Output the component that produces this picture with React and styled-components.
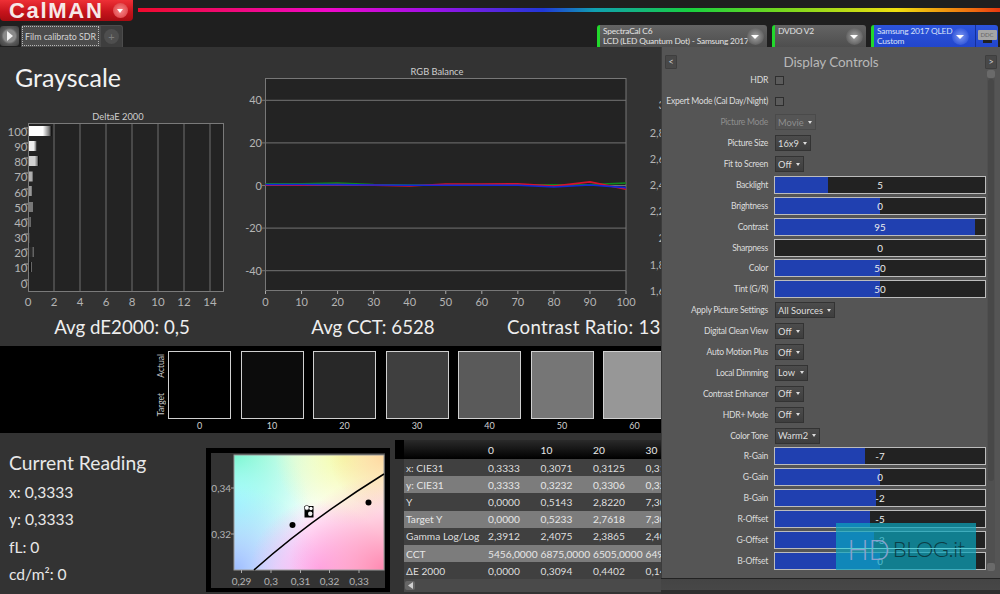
import styled, { createGlobalStyle } from 'styled-components';

const DISPLAY_FONT = '"Lato", "Open Sans", sans-serif';

const GlobalStyle = createGlobalStyle`
  html, body {
    margin: 0;
    padding: 0;
    background: #1f1f1f;
  }
  * {
    box-sizing: border-box;
  }
`;

const devices = [
  { lines: ['SpectraCal C6', 'LCD (LED Quantum Dot) - Samsung 2017'], width: 170 },
  { lines: ['DVDO V2'], width: 94 },
  { lines: ['Samsung 2017 QLED', 'Custom'], width: 127, active: true },
];

const controls = [
  { label: 'HDR', type: 'check' },
  { label: 'Expert Mode (Cal Day/Night)', type: 'check' },
  { label: 'Picture Mode', type: 'select', value: 'Movie', width: 41, disabled: true },
  { label: 'Picture Size', type: 'select', value: '16x9', width: 36 },
  { label: 'Fit to Screen', type: 'select', value: 'Off', width: 29 },
  { label: 'Backlight', type: 'slider', value: '5', fill: 25 },
  { label: 'Brightness', type: 'slider', value: '0', fill: 50 },
  { label: 'Contrast', type: 'slider', value: '95', fill: 95 },
  { label: 'Sharpness', type: 'slider', value: '0', fill: 0 },
  { label: 'Color', type: 'slider', value: '50', fill: 50 },
  { label: 'Tint (G/R)', type: 'slider', value: '50', fill: 50 },
  { label: 'Apply Picture Settings', type: 'select', value: 'All Sources', width: 60 },
  { label: 'Digital Clean View', type: 'select', value: 'Off', width: 29 },
  { label: 'Auto Motion Plus', type: 'select', value: 'Off', width: 29 },
  { label: 'Local Dimming', type: 'select', value: 'Low', width: 33 },
  { label: 'Contrast Enhancer', type: 'select', value: 'Off', width: 29 },
  { label: 'HDR+ Mode', type: 'select', value: 'Off', width: 29 },
  { label: 'Color Tone', type: 'select', value: 'Warm2', width: 45 },
  { label: 'R-Gain', type: 'slider', value: '-7', fill: 43 },
  { label: 'G-Gain', type: 'slider', value: '0', fill: 50 },
  { label: 'B-Gain', type: 'slider', value: '-2', fill: 48 },
  { label: 'R-Offset', type: 'slider', value: '-5', fill: 45 },
  { label: 'G-Offset', type: 'slider', value: '-3', fill: 47 },
  { label: 'B-Offset', type: 'slider', value: '0', fill: 50 },
];

const swatches = [
  { level: 0, color: '#000000' },
  { level: 10, color: '#0c0c0c' },
  { level: 20, color: '#282828' },
  { level: 30, color: '#3f3f3f' },
  { level: 40, color: '#5a5a5a' },
  { level: 50, color: '#767676' },
  { level: 60, color: '#979797' },
];

const tableRows = [
  ['x: CIE31', '0,3333', '0,3071', '0,3125', '0,3130'],
  ['y: CIE31', '0,3333', '0,3232', '0,3306', '0,3290'],
  ['Y', '0,0000', '0,5143', '2,8220', '7,3000'],
  ['Target Y', '0,0000', '0,5233', '2,7618', '7,3050'],
  ['Gamma Log/Log', '2,3912', '2,4075', '2,3865', '2,4050'],
  ['CCT', '5456,0000', '6875,0000', '6505,0000', '6495,0000'],
  ['ΔE 2000', '0,0000', '0,3094', '0,4402', '0,1450'],
];

const deltaBars = [
  { y: 126, end: 52, color: '#ffffff' },
  { y: 141, end: 37, color: '#eeeeee' },
  { y: 156, end: 38.5, color: '#d0d0d0' },
  { y: 171.5, end: 33, color: '#b0b0b0' },
  { y: 186, end: 32, color: '#989898' },
  { y: 202, end: 33, color: '#787878' },
  { y: 217, end: 31, color: '#585858' },
  { y: 233, end: 30, color: '#3a3a3a' },
  { y: 247, end: 34, color: '#2a2a2a' },
  { y: 262, end: 32, color: '#141414' },
];

const deltaYLabels = [
  [100, 132], [90, 147], [80, 162], [70, 177], [60, 193], [50, 208],
  [40, 223], [30, 238], [20, 253], [10, 268], [0, 284],
];

const deltaXLabels = [
  [0, 28], [2, 54], [4, 80], [6, 106], [8, 132], [10, 158], [12, 184], [14, 210],
];

const rgbSeries = [
  { color: '#0f8a1c', points: [0.8, 0.8, 1.2, 0.4, 0.2, 0.2, 0.3, 0.3, 0.3, 0.4, 1.2] },
  { color: '#d8102c', points: [0.3, 0.1, 0.4, 0.1, -0.2, 0.7, 0.7, 0.8, -0.3, 1.7, -1.8] },
  { color: '#1226d8', points: [0.5, 0.5, 0.4, 0.2, 0.1, 0.1, 0.1, 0.1, -0.7, 0.2, -1] },
];

const rgbX = (i) => 265.5 + i * 36.05;
const rgbY = (v) => 185.5 - v * 2.13;

function DeltaChart() {
  return (
    <svg width="244" height="188" viewBox="0 122 244 188">
      <defs>
        {deltaBars.map((bar, i) => (
          <linearGradient key={i} id={`bar${i}`}>
            <stop offset="0" stopColor={bar.color} />
            <stop offset="0.6" stopColor={bar.color} />
            <stop offset="0.88" stopColor="#777" />
            <stop offset="1" stopColor="#000" />
          </linearGradient>
        ))}
      </defs>
      <rect x="28.5" y="123.5" width="195" height="168" fill="#232323" stroke="#7a7a7a" />
      {deltaXLabels.slice(1).map(([label, x]) => (
        <line key={label} x1={x} x2={x} y1="124" y2="291" stroke="#707070" />
      ))}
      {deltaBars.map((bar, i) => (
        <rect key={i} x="29" y={bar.y} width={bar.end - 29} height="10" fill={`url(#bar${i})`} />
      ))}
      {deltaYLabels.map(([label, y]) => (
        <g key={label}>
          <line x1="24" x2="28" y1={y - 4} y2={y - 4} stroke="#aaa" />
          <ChartText x="27.5" y={y + 4} textAnchor="end" $size={11.5}>{label}</ChartText>
        </g>
      ))}
      {deltaXLabels.map(([label, x]) => (
        <ChartText key={label} x={x} y="306" textAnchor="middle" $size={11.5}>{label}</ChartText>
      ))}
    </svg>
  );
}

function RgbChart() {
  const yLabels = [40, 20, 0, -20, -40];
  const xLabels = [0, 10, 20, 30, 40, 50, 60, 70, 80, 90, 100];
  return (
    <svg width="396" height="232" viewBox="244 78 396 232">
      <rect x="265.5" y="78.5" width="360.5" height="212" fill="#232323" stroke="#777" />
      {yLabels.map((label) => (
        <g key={label}>
          <line x1="262" x2="626" y1={rgbY(label)} y2={rgbY(label)} stroke="#737373" />
          <ChartText x="262" y={rgbY(label) + 4} textAnchor="end" $size={11}>{label}</ChartText>
        </g>
      ))}
      {xLabels.map((label, i) => (
        <g key={label}>
          <line x1={rgbX(i)} x2={rgbX(i)} y1="291" y2="294" stroke="#aaa" />
          <ChartText x={rgbX(i)} y="306" textAnchor="middle" $size={11}>{label}</ChartText>
        </g>
      ))}
      {rgbSeries.map((series) => (
        <polyline
          key={series.color}
          points={series.points.map((v, i) => `${rgbX(i)},${rgbY(v)}`).join(' ')}
          fill="none"
          stroke={series.color}
          strokeWidth="1.6"
          strokeLinejoin="round"
        />
      ))}
    </svg>
  );
}

function GammaAxis() {
  const labels = [
    ['3', 109], ['2,8', 137], ['2,6', 163], ['2,4', 189],
    ['2,2', 215], ['2', 242], ['1,8', 269], ['1,6', 295],
  ];
  return (
    <svg width="21" height="232" viewBox="640 78 21 232">
      {labels.map(([label, y]) => (
        <ChartText key={label} x="665" y={y} textAnchor="end" $size={11}>{label}</ChartText>
      ))}
    </svg>
  );
}

function CiePlot() {
  return (
    <svg width="175" height="135" viewBox="211 453 175 135">
      <defs>
        <radialGradient id="cieTL" gradientUnits="userSpaceOnUse" cx="234" cy="455" r="105">
          <stop offset="0" stopColor="#68f4b8" />
          <stop offset="1" stopColor="#c8ffe0" stopOpacity="0" />
        </radialGradient>
        <radialGradient id="cieL" gradientUnits="userSpaceOnUse" cx="234" cy="505" r="75">
          <stop offset="0" stopColor="#a0fbff" />
          <stop offset="1" stopColor="#a0fbff" stopOpacity="0" />
        </radialGradient>
        <radialGradient id="cieBL" gradientUnits="userSpaceOnUse" cx="234" cy="570" r="85">
          <stop offset="0" stopColor="#9dbcff" />
          <stop offset="1" stopColor="#b8d8ff" stopOpacity="0" />
        </radialGradient>
        <radialGradient id="cieT" gradientUnits="userSpaceOnUse" cx="345" cy="455" r="70">
          <stop offset="0" stopColor="#f4fca8" />
          <stop offset="1" stopColor="#f4fca8" stopOpacity="0" />
        </radialGradient>
        <radialGradient id="cieTR" gradientUnits="userSpaceOnUse" cx="384" cy="455" r="55">
          <stop offset="0" stopColor="#ffd8a0" />
          <stop offset="1" stopColor="#ffd8a0" stopOpacity="0" />
        </radialGradient>
        <radialGradient id="cieB" gradientUnits="userSpaceOnUse" cx="320" cy="570" r="70">
          <stop offset="0" stopColor="#ffaaf2" />
          <stop offset="1" stopColor="#ffaaf2" stopOpacity="0" />
        </radialGradient>
        <radialGradient id="cieBR" gradientUnits="userSpaceOnUse" cx="384" cy="570" r="95">
          <stop offset="0" stopColor="#ff88b0" />
          <stop offset="1" stopColor="#ff9cc0" stopOpacity="0" />
        </radialGradient>
      </defs>
      <rect x="234" y="455" width="150" height="115" fill="#ffffff" />
      {['cieTL', 'cieL', 'cieBL', 'cieT', 'cieTR', 'cieB', 'cieBR'].map((id) => (
        <rect key={id} x="234" y="455" width="150" height="115" fill={`url(#${id})`} />
      ))}
      <rect x="234" y="455" width="150" height="115" fill="none" stroke="#999" />
      <path d="M254 570 Q 310 520 384 474" fill="none" stroke="#000" strokeWidth="1.5" />
      <circle cx="292.5" cy="525" r="3" fill="#000" />
      <circle cx="368.5" cy="502.5" r="3" fill="#000" />
      <rect x="304.5" y="506" width="9" height="11.5" fill="#000" />
      <circle cx="306.8" cy="507.8" r="2.4" fill="#fff" stroke="#000" strokeWidth="0.6" />
      <circle cx="311" cy="508.5" r="1.7" fill="#fff" />
      <circle cx="310.2" cy="513.8" r="2.2" fill="#eee" />
      {[[241.5, '0,29'], [271, '0,3'], [300.5, '0,31'], [329.5, '0,32'], [359, '0,33']].map(([x, label]) => (
        <g key={label}>
          <line x1={x} x2={x} y1="570" y2="573" stroke="#aaa" />
          <ChartText x={x} y="585" textAnchor="middle" $size={10}>{label}</ChartText>
        </g>
      ))}
      {[[488, '0,34'], [534, '0,32']].map(([y, label]) => (
        <g key={label}>
          <line x1="231" x2="234" y1={y} y2={y} stroke="#aaa" />
          <ChartText x="231" y={y + 3.5} textAnchor="end" $size={10}>{label}</ChartText>
        </g>
      ))}
    </svg>
  );
}

function Control({ item }) {
  if (item.type === 'check') return <Check />;
  if (item.type === 'select') {
    return (
      <Select $width={item.width} $disabled={item.disabled}>
        {item.value}
        <Caret />
      </Select>
    );
  }
  return (
    <Slider>
      <SliderFill style={{ width: `${item.fill}%` }} />
      <SliderValue>{item.value}</SliderValue>
    </Slider>
  );
}

export default function App() {
  return (
    <Page>
      <GlobalStyle />
      <TopBar>
        <Logo>
          <LogoText>CalMAN</LogoText>
          <LogoMenu />
        </Logo>
        <Rainbow />
      </TopBar>

      <TabBar>
        <Tabs>
          <PlayButton>
            <svg width="8" height="10" viewBox="0 0 8 10">
              <path d="M1 0 L7 5 L1 10 Z" fill="#f2f2f2" />
            </svg>
          </PlayButton>
          <Tab>
            <TabLabel>Film calibrato SDR</TabLabel>
          </Tab>
          <AddTab>
            <AddCircle>+</AddCircle>
          </AddTab>
        </Tabs>
        <Devices>
          {devices.map((device) => (
            <Device key={device.lines[0]} $width={device.width} $active={device.active}>
              <DeviceText>
                {device.lines.map((line) => (
                  <div key={line}>{line}</div>
                ))}
              </DeviceText>
              <DeviceArrow $active={device.active} />
              {device.active && (
                <DdcButton>
                  <DdcScreen>DDC</DdcScreen>
                  <DdcStand />
                </DdcButton>
              )}
            </Device>
          ))}
        </Devices>
      </TabBar>

      <Main>
        <Workspace>
          <Summary>
            <ChartRow>
              <DeltaColumn>
                <PageTitle>Grayscale</PageTitle>
                <DeltaTitle>DeltaE 2000</DeltaTitle>
                <DeltaChart />
              </DeltaColumn>
              <RgbColumn>
                <RgbTitle>RGB Balance</RgbTitle>
                <RgbChart />
              </RgbColumn>
              <GammaColumn>
                <GammaAxis />
              </GammaColumn>
            </ChartRow>
            <StatRow>
              <Stat>Avg dE2000: 0,5</Stat>
              <Stat>Avg CCT: 6528</Stat>
              <Stat $left>Contrast Ratio: 13</Stat>
            </StatRow>
          </Summary>

          <Strip>
            <StripSide>
              <SideLabel>Actual</SideLabel>
              <SideLabel>Target</SideLabel>
            </StripSide>
            {swatches.map((swatch) => (
              <SwatchColumn key={swatch.level}>
                <Swatch $color={swatch.color} />
                <SwatchLabel>{swatch.level}</SwatchLabel>
              </SwatchColumn>
            ))}
          </Strip>

          <Bottom>
            <Reading>
              <ReadingTitle>Current Reading</ReadingTitle>
              <ReadingLine>x: 0,3333</ReadingLine>
              <ReadingLine>y: 0,3333</ReadingLine>
              <ReadingLine>fL: 0</ReadingLine>
              <ReadingLine>cd/m²: 0</ReadingLine>
            </Reading>
            <CieFrame>
              <CiePlot />
            </CieFrame>
            <TableWrap>
              <DataTable>
                <thead>
                  <tr>
                    <CornerCell />
                    <HeadCell />
                    {[0, 10, 20, 30].map((level) => (
                      <HeadCell key={level}>{level}</HeadCell>
                    ))}
                  </tr>
                </thead>
                <tbody>
                  {tableRows.map((row, i) => (
                    <tr key={row[0]}>
                      <SelectCell />
                      {row.map((cell, j) => (
                        <BodyCell key={j} $even={i % 2 === 1}>{cell}</BodyCell>
                      ))}
                    </tr>
                  ))}
                </tbody>
              </DataTable>
              <TableScroll>
                <TableScrollButton>
                  <svg width="5" height="7" viewBox="0 0 5 7">
                    <path d="M5 0 L0 3.5 L5 7 Z" fill="#cfcfcf" />
                  </svg>
                </TableScrollButton>
              </TableScroll>
            </TableWrap>
          </Bottom>
        </Workspace>

        <PanelColumn>
          <Panel>
            <PanelHeader>
              <PanelButton>&lt;</PanelButton>
              <PanelTitle>Display Controls</PanelTitle>
              <PanelButton>&gt;</PanelButton>
            </PanelHeader>
            <PanelBody>
              <ControlList>
                {controls.map((item) => (
                  <ControlRow key={item.label}>
                    <ControlLabel $disabled={item.disabled}>{item.label}</ControlLabel>
                    <Control item={item} />
                  </ControlRow>
                ))}
              </ControlList>
              <ScrollBar>
                <ScrollEnd />
                <ScrollThumb />
                <ScrollEnd />
              </ScrollBar>
            </PanelBody>
            <Watermark>
              <WatermarkHd>HD</WatermarkHd>
              <WatermarkBlog>BLOG.it</WatermarkBlog>
              <WatermarkLine />
            </Watermark>
          </Panel>
          <PanelFoot />
        </PanelColumn>
      </Main>
    </Page>
  );
}

const Page = styled.div`
  width: 1000px;
  height: 594px;
  overflow: hidden;
  background: #1f1f1f;
  font-family: ${DISPLAY_FONT};
  display: flex;
  flex-direction: column;
`;

const TopBar = styled.div`
  height: 25px;
  display: flex;
  align-items: flex-start;
  gap: 5px;
`;

const Logo = styled.div`
  width: 133px;
  height: 21px;
  background: linear-gradient(#ee3036, #c8141c 55%, #a80c12);
  border-radius: 0 0 4px 4px;
  display: flex;
  align-items: center;
  justify-content: space-between;
  padding: 0 5px 0 9px;
`;

const LogoText = styled.span`
  font-family: "Liberation Sans", sans-serif;
  font-weight: 700;
  font-size: 22px;
  line-height: 21px;
  letter-spacing: 1.7px;
  color: #f6e8e8;
`;

const LogoMenu = styled.span`
  width: 15px;
  height: 15px;
  border-radius: 50%;
  background: radial-gradient(#f8888a, #d83438);
  position: relative;
  &::after {
    content: '';
    position: absolute;
    left: 4px;
    top: 6px;
    border-left: 3.5px solid transparent;
    border-right: 3.5px solid transparent;
    border-top: 4px solid #fff;
  }
`;

const Rainbow = styled.div`
  flex: 1;
  height: 4px;
  margin-top: 8px;
  background: linear-gradient(
    90deg,
    #f00a2c 0%,
    #f008c8 22%,
    #a010e8 34%,
    #2038d8 47%,
    #10a0b0 53%,
    #18d040 64%,
    #70d820 74%,
    #f0e010 88%,
    #f06a10 97%,
    #e83810 100%
  );
`;

const TabBar = styled.div`
  height: 22px;
  display: flex;
  justify-content: space-between;
  align-items: stretch;
  padding-right: 2px;
`;

const Tabs = styled.div`
  display: flex;
  gap: 2px;
`;

const PlayButton = styled.div`
  width: 19px;
  height: 20px;
  margin-top: 1px;
  border-radius: 3px;
  background: radial-gradient(circle at 50% 50%, #8a8a8a 0 6px, #5a5a5a 8px, #3c3c3c);
  display: flex;
  align-items: center;
  justify-content: center;
`;

const Tab = styled.div`
  width: 79px;
  flex-shrink: 0;
  padding: 1px;
  background: #4c4c4c;
  border-radius: 3px 0 0 0;
`;

const TabLabel = styled.div`
  height: 100%;
  border: 1px dotted #b8b8b8;
  color: #d4d4d4;
  font-size: 8.9px;
  letter-spacing: -0.05px;
  display: flex;
  align-items: center;
  justify-content: center;
  white-space: nowrap;
`;

const AddTab = styled.div`
  width: 23px;
  flex-shrink: 0;
  margin-left: -2px;
  background: #3e3e3e;
  border: 1px solid #4c4c4c;
  border-bottom: 0;
  border-radius: 0 3px 0 0;
  display: flex;
  align-items: center;
  justify-content: center;
`;

const AddCircle = styled.div`
  width: 15px;
  height: 15px;
  border-radius: 50%;
  background: #4e4e4e;
  color: #7c7c7c;
  font-size: 11px;
  line-height: 15px;
  text-align: center;
`;

const Devices = styled.div`
  display: flex;
  gap: 5px;
`;

const Device = styled.div`
  width: ${(p) => p.$width}px;
  background: ${(p) => (p.$active ? 'linear-gradient(#2c54dc, #2246cc)' : 'linear-gradient(#646464, #4e4e4e)')};
  border-left: 3px solid #22d82c;
  border-radius: 3px 3px 0 0;
  display: flex;
  align-items: stretch;
  color: ${(p) => (p.$active ? '#d8e0f8' : '#e2e2e2')};
`;

const DeviceText = styled.div`
  flex: 1;
  min-width: 0;
  padding: 1px 0 0 3px;
  font-size: 8.4px;
  letter-spacing: -0.2px;
  line-height: 10.3px;
  white-space: nowrap;
`;

const DeviceArrow = styled.div`
  width: 17px;
  height: 17px;
  margin: 3px 3px 0 0;
  flex-shrink: 0;
  border-radius: 50%;
  background: ${(p) => (p.$active
    ? 'radial-gradient(#7e98f0, #2a50d8 80%)'
    : 'radial-gradient(#a4a4a4, #5a5a5a 80%)')};
  position: relative;
  &::after {
    content: '';
    position: absolute;
    left: 4px;
    top: 7px;
    border-left: 4.5px solid transparent;
    border-right: 4.5px solid transparent;
    border-top: 4px solid #fff;
  }
`;

const DdcButton = styled.div`
  width: 23px;
  margin-left: 3px;
  border-left: 1px solid #15309a;
  padding-top: 5px;
  display: flex;
  flex-direction: column;
  align-items: center;
  flex-shrink: 0;
`;

const DdcScreen = styled.div`
  width: 19px;
  height: 10px;
  background: #a6a6a6;
  border-radius: 1px;
  color: #666;
  font-size: 6px;
  line-height: 10px;
  text-align: center;
`;

const DdcStand = styled.div`
  width: 9px;
  height: 3px;
  background: #222;
`;

const Main = styled.div`
  flex: 1;
  display: flex;
  min-height: 0;
`;

const Workspace = styled.div`
  width: 661px;
  overflow: hidden;
  display: flex;
  flex-direction: column;
`;

const Summary = styled.div`
  height: 299px;
  background: #333333;
  display: flex;
  flex-direction: column;
`;

const ChartRow = styled.div`
  height: 263px;
  display: flex;
`;

const DeltaColumn = styled.div`
  width: 244px;
  flex-shrink: 0;
  display: flex;
  flex-direction: column;
`;

const PageTitle = styled.h1`
  height: 63px;
  margin: 0;
  padding: 12px 0 0 15px;
  font-size: 25px;
  line-height: 36px;
  font-weight: 400;
  color: #f2f2f2;
`;

const ChartTitle = styled.div`
  height: 12px;
  text-align: center;
  font-size: 9.3px;
  line-height: 12px;
  color: #cfcfcf;
`;

const DeltaTitle = styled(ChartTitle)`
  padding-right: 8px;
  margin-top: 1px;
  margin-bottom: -1px;
`;

const RgbTitle = styled(ChartTitle)`
  padding-right: 10px;
`;

const RgbColumn = styled.div`
  width: 396px;
  flex-shrink: 0;
  padding-top: 19px;
  display: flex;
  flex-direction: column;
  svg {
    display: block;
  }
`;

const GammaColumn = styled.div`
  width: 21px;
  padding-top: 31px;
  svg {
    display: block;
  }
`;

const ChartText = styled.text`
  font-family: ${DISPLAY_FONT};
  font-size: ${(p) => p.$size}px;
  fill: #b4b4b4;
`;

const StatRow = styled.div`
  flex: 1;
  display: grid;
  grid-template-columns: 244px 258px 1fr;
  align-items: center;
  padding-bottom: 3px;
`;

const Stat = styled.div`
  text-align: ${(p) => (p.$left ? 'left' : 'center')};
  padding-left: ${(p) => (p.$left ? 5 : 0)}px;
  letter-spacing: ${(p) => (p.$left ? 0.25 : 0)}px;
  font-size: 18.7px;
  color: #eeeeee;
  white-space: nowrap;
`;

const Strip = styled.div`
  height: 87px;
  background: #000;
  display: flex;
  align-items: flex-start;
  padding: 5px 0 0 155px;
  gap: 9.5px;
`;

const StripSide = styled.div`
  width: 12px;
  margin-right: -8.5px;
  height: 68px;
  padding: 3px 0;
  display: flex;
  flex-direction: column;
  justify-content: space-between;
  align-items: center;
  flex-shrink: 0;
`;

const SideLabel = styled.div`
  writing-mode: vertical-rl;
  transform: rotate(180deg);
  font-size: 8.5px;
  color: #c8c8c8;
`;

const SwatchColumn = styled.div`
  width: 63px;
  flex-shrink: 0;
`;

const Swatch = styled.div`
  height: 68px;
  background: ${(p) => p.$color};
  border: 1px solid #d0d0d0;
`;

const SwatchLabel = styled.div`
  margin-top: 1px;
  height: 12px;
  text-align: center;
  font-size: 9px;
  line-height: 12px;
  color: #d0d0d0;
`;

const Bottom = styled.div`
  flex: 1;
  min-height: 0;
  background: #333333;
  display: flex;
  align-items: flex-start;
`;

const Reading = styled.div`
  width: 206px;
  flex-shrink: 0;
  padding: 16px 0 0 9px;
  color: #e8e8e8;
`;

const ReadingTitle = styled.div`
  font-size: 19.3px;
  line-height: 27px;
  margin-bottom: 3px;
`;

const ReadingLine = styled.div`
  font-size: 15.6px;
  line-height: 27.3px;
`;

const CieFrame = styled.div`
  width: 184px;
  height: 144px;
  flex-shrink: 0;
  margin-top: 15px;
  border: 5px solid #000;
  border-bottom-width: 4px;
  background: #333;
  svg {
    display: block;
  }
`;

const TableWrap = styled.div`
  margin: 7px 0 0 5px;
  width: 270px;
  flex-shrink: 0;
`;

const DataTable = styled.table`
  width: 270px;
  table-layout: fixed;
  border-collapse: collapse;
  font-size: 10.2px;
  color: #dcdcdc;
  tr {
    height: 17.2px;
  }
  thead tr {
    height: 19px;
  }
`;

const CornerCell = styled.th`
  width: 9px;
  padding: 0;
  background: #000;
`;

const HeadCell = styled.th`
  padding: 0 0 0 2px;
  text-align: left;
  font-weight: 400;
  color: #e8e8e8;
  background: linear-gradient(#2a2a2a, #000);
  width: 52.5px;
  &:nth-child(2) {
    width: 82px;
  }
`;

const SelectCell = styled.td`
  width: 9px;
  padding: 0;
  background: #333;
`;

const BodyCell = styled.td`
  padding: 0 0 0 2px;
  white-space: nowrap;
  background: ${(p) => (p.$even ? '#7c7c7c' : '#404040')};
  color: ${(p) => (p.$even ? '#e6e6e6' : '#dedede')};
`;

const TableScroll = styled.div`
  height: 13px;
  margin-left: 9px;
  background: #4a4a4a;
  display: flex;
  align-items: center;
  padding-left: 1px;
`;

const TableScrollButton = styled.div`
  width: 10px;
  height: 9px;
  background: #666;
  border-radius: 2px;
  display: flex;
  align-items: center;
  justify-content: center;
`;

const PanelColumn = styled.div`
  flex: 1;
  display: flex;
  flex-direction: column;
`;

const Panel = styled.div`
  flex: 1;
  background: #555555;
  border-left: 1px solid #3c3c3c;
  position: relative;
  overflow: hidden;
`;

const PanelHeader = styled.div`
  height: 23px;
  padding: 7px 3px 0 3px;
  display: flex;
  align-items: center;
  justify-content: space-between;
`;

const PanelButton = styled.div`
  width: 12px;
  height: 14px;
  background: #484848;
  border: 1px solid #3e3e3e;
  border-radius: 1px;
  color: #d0d0d0;
  font-size: 9px;
  line-height: 11px;
  text-align: center;
`;

const PanelTitle = styled.div`
  font-size: 13.5px;
  letter-spacing: -0.1px;
  color: #b8b8b8;
`;

const PanelBody = styled.div`
  display: flex;
  padding-right: 5px;
`;

const ControlList = styled.div`
  flex: 1;
  display: grid;
  grid-auto-rows: 20.9px;
`;

const ControlRow = styled.div`
  display: grid;
  grid-template-columns: 106px 212px;
  column-gap: 6px;
  align-items: center;
`;

const ControlLabel = styled.div`
  text-align: right;
  font-size: 8.6px;
  letter-spacing: -0.28px;
  white-space: nowrap;
  color: ${(p) => (p.$disabled ? '#8e8e8e' : '#dcdcdc')};
`;

const Check = styled.div`
  width: 9px;
  height: 9px;
  margin-left: 1px;
  background: #5c5c5c;
  border: 1px solid #2e2e2e;
`;

const Select = styled.div`
  width: ${(p) => p.$width}px;
  height: 16px;
  margin-left: 1px;
  padding: 0 3px 0 2px;
  background: ${(p) => (p.$disabled ? '#555' : 'linear-gradient(#4c4c4c, #3e3e3e)')};
  border: 1px solid ${(p) => (p.$disabled ? '#4a4a4a' : '#333')};
  display: flex;
  align-items: center;
  justify-content: space-between;
  font-size: 9.3px;
  color: ${(p) => (p.$disabled ? '#8e8e8e' : '#dedede')};
  white-space: nowrap;
`;

const Caret = styled.span`
  width: 0;
  height: 0;
  border-left: 2.5px solid transparent;
  border-right: 2.5px solid transparent;
  border-top: 3px solid #dddddd;
`;

const Slider = styled.div`
  height: 18px;
  background: #222222;
  border: 1px solid #bcbcbc;
  position: relative;
`;

const SliderFill = styled.div`
  height: 100%;
  background: #2040b0;
`;

const SliderValue = styled.div`
  position: absolute;
  inset: 0;
  display: flex;
  align-items: center;
  justify-content: center;
  font-size: 9.8px;
  color: #eeeeee;
`;

const ScrollBar = styled.div`
  width: 8px;
  height: 501px;
  display: flex;
  flex-direction: column;
  background: #505050;
`;

const ScrollEnd = styled.div`
  height: 8px;
  background: #6a6a6a;
  border-radius: 2px;
`;

const ScrollThumb = styled.div`
  height: 402px;
  margin: 1px 1px auto;
  background: #484848;
  border-radius: 3px;
`;

const Watermark = styled.div`
  position: absolute;
  left: 174px;
  top: 476px;
  width: 140px;
  height: 47px;
  padding-top: 4px;
  background: rgba(10, 165, 190, 0.7);
  display: flex;
  align-items: center;
  justify-content: center;
`;

const WatermarkHd = styled.span`
  font-size: 28px;
  font-weight: 300;
  color: #8aa2cf;
`;

const WatermarkBlog = styled.span`
  font-size: 22px;
  font-weight: 300;
  color: #0b3d46;
  margin-left: 3px;
  letter-spacing: -0.5px;
`;

const WatermarkLine = styled.div`
  position: absolute;
  left: 0;
  right: 0;
  top: 25px;
  height: 1px;
  background: #5ccad2;
`;

const PanelFoot = styled.div`
  height: 16px;
  background: linear-gradient(#222 0 1px, #444 1px, #474747 12px, #2e2e2e 12px);
`;
